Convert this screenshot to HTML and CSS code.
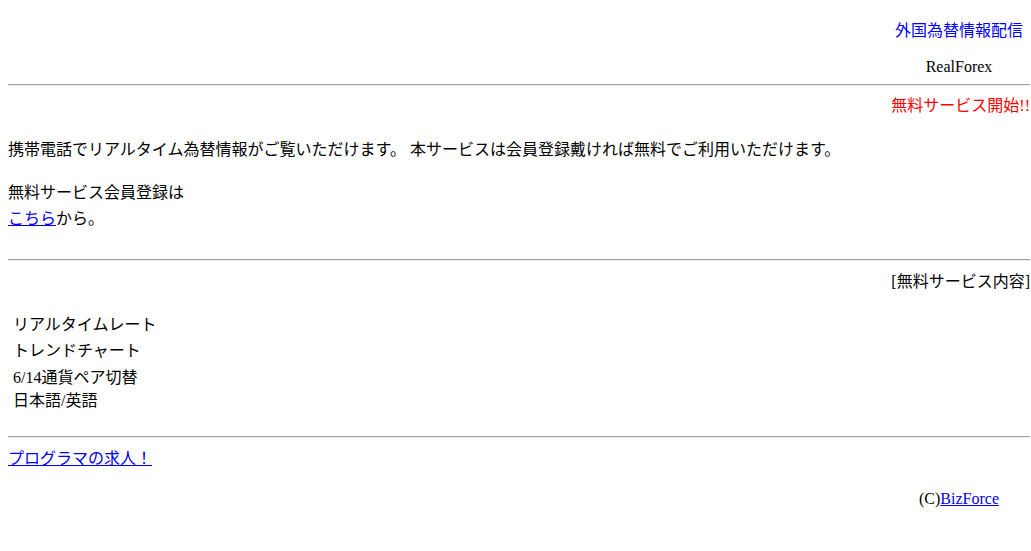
FILE: index.html
```html
<!DOCTYPE html>
<html lang="ja">
<head>
    <meta charset="UTF-8">
    <title>RealForex - 外国為替情報配信</title>
    <link rel="stylesheet" href="styles.css">
</head>
<body>
    <div class="header">
        <div class="brand">
            <div class="brand-title">外国為替情報配信</div>
            <div class="brand-name">RealForex</div>
        </div>
    </div>

    <hr class="rule rule-top">

    <div class="notice">無料サービス開始!!</div>

    <p class="intro">携帯電話でリアルタイム為替情報がご覧いただけます。 本サービスは会員登録戴ければ無料でご利用いただけます。</p>

    <p class="signup">無料サービス会員登録は<br><a href="#">こちら</a>から。</p>

    <hr class="rule rule-mid">

    <div class="section-title">[無料サービス内容]</div>

    <div class="features">
        <div class="feature feature-1">リアルタイムレート</div>
        <div class="feature feature-2">トレンドチャート</div>
        <div class="feature feature-3">6/14通貨ペア切替</div>
        <div class="feature feature-4">日本語/英語</div>
    </div>

    <hr class="rule rule-bottom">

    <div class="jobs"><a href="#">プログラマの求人！</a></div>

    <div class="footer">
        <div class="copyright">(C)<a href="#">BizForce</a></div>
    </div>
</body>
</html>
```

FILE: styles.css
```css
body {
    margin: 8px 1px 0 8px;
    font-family: "Liberation Serif", "Noto Sans CJK JP", serif;
    font-size: 16px;
    line-height: 20px;
    color: #000;
    background: #fff;
}
a {
    color: #0000ee;
}
.header {
    display: flex;
    justify-content: flex-end;
    padding-top: 13px;
}
.brand {
    width: 130px;
    margin-right: 6px;
    text-align: center;
}
.brand-title {
    color: #0000ff;
    white-space: nowrap;
}
.brand-name {
    margin-top: 17px;
    line-height: 18px;
}
.rule {
    height: 0;
    border: 0;
    border-top: 1px solid #a0a0a0;
    border-bottom: 1px solid #eeeeee;
    margin: 0;
}
.rule-top {
    margin-top: 8px;
}
.notice {
    margin-top: 10px;
    text-align: right;
    color: #ff0000;
}
.intro {
    margin: 24px 0 0;
}
.signup {
    margin: 20px 0 0;
    line-height: 26px;
}
.rule-mid {
    margin-top: 27px;
}
.section-title {
    margin-top: 11px;
    text-align: right;
}
.features {
    padding-left: 5px;
}
.feature-1 {
    margin-top: 23px;
}
.feature-2 {
    margin-top: 6px;
}
.feature-3 {
    margin-top: 7px;
}
.feature-4 {
    margin-top: 3px;
}
.rule-bottom {
    margin-top: 25px;
}
.jobs {
    margin-top: 11px;
}
.footer {
    display: flex;
    justify-content: flex-end;
    margin-top: 21px;
}
.copyright {
    width: 130px;
    margin-right: 6px;
    text-align: center;
    line-height: 18px;
}
```
